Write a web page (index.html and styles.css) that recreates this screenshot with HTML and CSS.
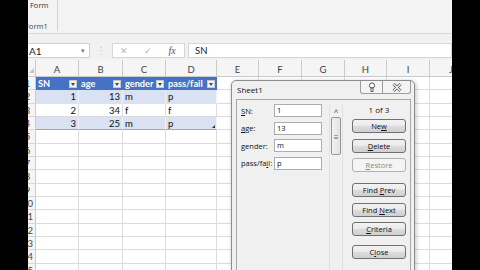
FILE: index.html
```html
<!DOCTYPE html>
<html lang="en">
<head>
  <meta charset="UTF-8" />
  <title>Sheet1 form</title>
  <link rel="stylesheet" href="styles.css">
</head>
<body>
  <div class="screen">
    <div class="ribbon">
      <div class="ribbon-group">
        <div class="ribbon-cmd">Form</div>
        <div class="ribbon-label">Form1</div>
      </div>
    </div>

    <div class="formula-bar">
      <div class="name-box"><span>A1</span><span class="caret">&#9662;</span></div>
      <div class="bar-grip">&#8942;</div>
      <div class="fx-box">
        <span class="fx-btn">&#10005;</span>
        <span class="fx-btn">&#10003;</span>
        <span class="fx-btn fx">fx</span>
      </div>
      <div class="formula">SN</div>
    </div>

    <div class="sheet">
      <div class="row cols">
        <div class="corner"></div><div>A</div><div>B</div><div>C</div><div>D</div><div>E</div><div>F</div><div>G</div><div>H</div><div>I</div><div>J</div>
      </div>
      <div class="row">
        <div class="rh"><span>1</span></div>
        <div class="th">SN<b class="flt"></b></div>
        <div class="th">age<b class="flt"></b></div>
        <div class="th">gender<b class="flt"></b></div>
        <div class="th">pass/fail<b class="flt"></b></div>
        <div></div><div></div><div></div><div></div><div></div><div></div>
      </div>
      <div class="row">
        <div class="rh"><span>2</span></div>
        <div class="band num">1</div><div class="band num">13</div><div class="band">m</div><div class="band">p</div>
        <div></div><div></div><div></div><div></div><div></div><div></div>
      </div>
      <div class="row">
        <div class="rh"><span>3</span></div>
        <div class="num">2</div><div class="num">34</div><div>f</div><div>f</div>
        <div></div><div></div><div></div><div></div><div></div><div></div>
      </div>
      <div class="row">
        <div class="rh"><span>4</span></div>
        <div class="band num tb-end">3</div><div class="band num tb-end">25</div><div class="band tb-end">m</div><div class="band tb-end handle">p</div>
        <div></div><div></div><div></div><div></div><div></div><div></div>
      </div>
      <div class="row"><div class="rh"><span>5</span></div><div></div><div></div><div></div><div></div><div></div><div></div><div></div><div></div><div></div><div></div></div>
      <div class="row"><div class="rh"><span>6</span></div><div></div><div></div><div></div><div></div><div></div><div></div><div></div><div></div><div></div><div></div></div>
      <div class="row"><div class="rh"><span>7</span></div><div></div><div></div><div></div><div></div><div></div><div></div><div></div><div></div><div></div><div></div></div>
      <div class="row"><div class="rh"><span>8</span></div><div></div><div></div><div></div><div></div><div></div><div></div><div></div><div></div><div></div><div></div></div>
      <div class="row"><div class="rh"><span>9</span></div><div></div><div></div><div></div><div></div><div></div><div></div><div></div><div></div><div></div><div></div></div>
      <div class="row"><div class="rh"><span>10</span></div><div></div><div></div><div></div><div></div><div></div><div></div><div></div><div></div><div></div><div></div></div>
      <div class="row"><div class="rh"><span>11</span></div><div></div><div></div><div></div><div></div><div></div><div></div><div></div><div></div><div></div><div></div></div>
      <div class="row"><div class="rh"><span>12</span></div><div></div><div></div><div></div><div></div><div></div><div></div><div></div><div></div><div></div><div></div></div>
      <div class="row"><div class="rh"><span>13</span></div><div></div><div></div><div></div><div></div><div></div><div></div><div></div><div></div><div></div><div></div></div>
      <div class="row"><div class="rh"><span>14</span></div><div></div><div></div><div></div><div></div><div></div><div></div><div></div><div></div><div></div><div></div></div>
      <div class="row"><div class="rh"><span>15</span></div><div></div><div></div><div></div><div></div><div></div><div></div><div></div><div></div><div></div><div></div></div>
    </div>

    <div class="dialog">
      <div class="dlg-title">
        <span>Sheet1</span>
        <div class="dlg-ctrls">
          <span class="ctl help">
            <svg width="8" height="10" viewBox="0 0 8 10">
              <circle cx="4" cy="3.5" r="2.6" fill="#fff" stroke="#555" stroke-width="1"/>
              <rect x="3" y="6" width="2" height="3.5" fill="#fff" stroke="#555" stroke-width="0.9"/>
            </svg>
          </span>
          <span class="ctl close">
            <svg width="10" height="9" viewBox="0 0 10 9">
              <path d="M1.5 1 L8.5 8 M8.5 1 L1.5 8" stroke="#555" stroke-width="2.8"/>
              <path d="M1.5 1 L8.5 8 M8.5 1 L1.5 8" stroke="#fff" stroke-width="1.1"/>
            </svg>
          </span>
        </div>
      </div>
      <div class="dlg-body">
        <div class="fields">
          <div class="field"><label><u>S</u>N:</label><div class="input">1</div></div>
          <div class="field"><label><u>a</u>ge:</label><div class="input">13</div></div>
          <div class="field"><label><u>g</u>ender:</label><div class="input">m</div></div>
          <div class="field"><label>pass/fa<u>i</u>l:</label><div class="input">p</div></div>
        </div>
        <div class="scroll">
          <div class="scroll-up">&#708;</div>
          <div class="thumb">&#8801;</div>
        </div>
        <div class="actions">
          <div class="count">1 of 3</div>
          <button>Ne<u>w</u></button>
          <button><u>D</u>elete</button>
          <button disabled><u>R</u>estore</button>
          <button class="group">Find <u>P</u>rev</button>
          <button>Find <u>N</u>ext</button>
          <button><u>C</u>riteria</button>
          <button class="last">C<u>l</u>ose</button>
        </div>
      </div>
    </div>
  </div>
</body>
</html>
```

FILE: styles.css
```css
body {
  margin: 0;
  background: #000;
  font-family: Lato, "Liberation Sans", sans-serif;
}
.screen {
  position: relative;
  width: 424px;
  height: 270px;
  margin-left: 28px;
  overflow: hidden;
  background: #fff;
}

/* ribbon + formula bar */
.ribbon {
  height: 33px;
  background: #f3f3f3;
  border-bottom: 1px solid #d8d8d8;
  display: flex;
}
.ribbon-group {
  width: 29px;
  height: 31px;
  border-right: 1px solid #d2d2d2;
  display: flex;
  flex-direction: column;
  justify-content: space-between;
  font-family: "Open Sans", sans-serif;
  font-size: 7.5px;
  line-height: 10px;
  color: #333;
}
.ribbon-cmd {
  padding: 0 0 0 2px;
}
.ribbon-label {
  margin-left: -3px;
  color: #444;
}
.formula-bar {
  height: 26px;
  box-sizing: border-box;
  padding-top: 9px;
  background: #f1f1f1;
  display: flex;
  align-items: flex-start;
}
.name-box {
  width: 65px;
  height: 15px;
  margin-left: -3px;
  padding: 0 4px 0 3px;
  box-sizing: border-box;
  background: #fff;
  border: 1px solid #cfcfcf;
  display: flex;
  justify-content: space-between;
  align-items: center;
  font-size: 10px;
  color: #222;
}
.caret {
  font-size: 7px;
  color: #777;
}
.bar-grip {
  width: 22px;
  text-align: center;
  font-size: 10px;
  line-height: 15px;
  color: #c2c2c2;
}
.fx-box {
  width: 73px;
  height: 15px;
  box-sizing: border-box;
  background: #fff;
  border: 1px solid #d6d6d6;
  display: flex;
  align-items: center;
  padding-left: 6px;
  gap: 14px;
}
.fx-btn {
  width: 10px;
  text-align: center;
  font-size: 9px;
  color: #b4b4b4;
}
.fx {
  font-family: "Liberation Serif", serif;
  font-style: italic;
  font-size: 10px;
  color: #555;
}
.formula {
  flex: 1;
  height: 15px;
  margin-left: 3px;
  padding-left: 6px;
  box-sizing: border-box;
  background: #fff;
  border: 1px solid #d6d6d6;
  font-size: 9.5px;
  line-height: 13px;
  color: #222;
}

/* sheet grid */
.row {
  display: grid;
  grid-template-columns: 8px 43px 44px 43px 51px 42px 43px 43px 42px 43px 43px;
  height: 13.333px;
}
.row > div {
  box-sizing: border-box;
  border-right: 1px solid #dcdcdc;
  border-bottom: 1px solid #dcdcdc;
  overflow: hidden;
  white-space: nowrap;
  font-size: 9.5px;
  line-height: 13px;
  padding: 0 2px;
  color: #111;
}
.row.cols {
  height: 17px;
}
.row.cols > div {
  background: #f5f5f5;
  border-color: #cacaca;
  text-align: center;
  color: #444;
  padding-top: 4px;
  line-height: 12px;
}
.row.cols > .corner {
  position: relative;
}
.corner::after {
  content: "";
  position: absolute;
  right: 1px;
  bottom: 3px;
  border-left: 5px solid transparent;
  border-bottom: 5px solid #c4c4c4;
}
.row > .rh {
  background: #f5f5f5;
  border-right-color: #cacaca;
  border-bottom-color: #d6d6d6;
  padding: 0;
  color: #444;
}
.rh span {
  display: block;
  width: 17px;
  margin-left: -9px;
  text-align: center;
}
.row > .th {
  background: #4472c4;
  border-color: #4472c4;
  color: #fff;
  font-weight: bold;
  font-size: 9.2px;
  display: flex;
  align-items: center;
  justify-content: space-between;
  padding: 1px 1px 0 2px;
}
.flt {
  position: relative;
  flex: none;
  width: 8px;
  height: 8px;
  box-sizing: border-box;
  background: #f3f3f3;
  border: 1px solid #c8c8c8;
}
.flt::after {
  content: "";
  position: absolute;
  left: 1px;
  top: 2px;
  border-left: 2.5px solid transparent;
  border-right: 2.5px solid transparent;
  border-top: 3px solid #444;
}
.row > .band {
  background: #d9e1f2;
  border-color: #d9e1f2;
  border-right-color: #eef2f9;
}
.row > .num {
  text-align: right;
}
.row > .tb-end {
  border-bottom-color: #8ea9db;
}
.row > .handle {
  position: relative;
}
.handle::after {
  content: "";
  position: absolute;
  right: 1px;
  bottom: 1px;
  border-left: 3px solid transparent;
  border-bottom: 3px solid #333;
}

/* data form dialog */
.dialog {
  position: absolute;
  left: 203px;
  top: 80px;
  width: 184px;
  height: 200px;
  box-sizing: border-box;
  background: #f0f0f0;
  border: 1px solid #8d8d8d;
  border-radius: 5px 5px 0 0;
  box-shadow: 1px 1px 4px rgba(0, 0, 0, 0.25);
  font-family: "Open Sans", sans-serif;
  font-size: 7.5px;
  color: #111;
  display: flex;
  flex-direction: column;
}
.dlg-title {
  height: 18px;
  display: flex;
  justify-content: space-between;
  align-items: flex-start;
  padding-left: 5px;
  line-height: 17px;
  font-size: 8px;
}
.dlg-ctrls {
  display: flex;
  margin-right: 3px;
  height: 12px;
  border: 1px solid #9c9c9c;
  border-top: none;
  border-radius: 0 0 3px 3px;
  background: #f4f4f4;
}
.ctl {
  display: flex;
  align-items: center;
  justify-content: center;
}
.help {
  width: 21px;
  border-right: 1px solid #9c9c9c;
}
.close {
  width: 27px;
}
.dlg-body {
  flex: 1;
  margin: 0 3px 0 4px;
  border: 1px solid #a8a8a8;
  padding: 4px 0 0 4px;
  display: flex;
  align-items: flex-start;
}
.fields {
  width: 81px;
  display: flex;
  flex-direction: column;
  gap: 4.5px;
}
.field {
  display: flex;
  align-items: center;
  height: 13px;
}
.field label {
  width: 33px;
  flex: none;
  white-space: nowrap;
}
.input {
  width: 48px;
  height: 13px;
  box-sizing: border-box;
  background: #fff;
  border: 1px solid #abadb3;
  padding-left: 2px;
  line-height: 11px;
}
.scroll {
  width: 14px;
  height: 170px;
  margin-left: 7px;
  box-sizing: border-box;
  border-left: 1px solid #e2e2e2;
  border-right: 1px solid #e2e2e2;
  display: flex;
  flex-direction: column;
  align-items: center;
}
.scroll-up {
  height: 13px;
  line-height: 14px;
  font-size: 8px;
  color: #555;
}
.thumb {
  width: 10px;
  height: 38px;
  box-sizing: border-box;
  border: 1px solid #979797;
  border-radius: 2px;
  background: linear-gradient(to right, #f2f2f2, #e2e2e2);
  display: flex;
  align-items: center;
  justify-content: center;
  font-size: 8px;
  color: #666;
}
.actions {
  width: 54px;
  margin-left: 9px;
  display: flex;
  flex-direction: column;
}
.count {
  height: 15px;
  line-height: 12px;
  text-align: center;
  font-size: 8px;
}
button {
  height: 14px;
  margin: 5.5px 0 0;
  padding: 0;
  border: 1px solid #707070;
  border-radius: 3px;
  background: linear-gradient(#f2f2f2, #ebebeb 45%, #dddddd 50%, #cfcfcf);
  font-family: "Open Sans", sans-serif;
  font-size: 7.5px;
  line-height: 12px;
  color: #111;
}
.count + button {
  margin-top: 0;
}
button:disabled {
  border-color: #adb2b5;
  background: #f4f4f4;
  color: #8a8a8a;
}
button.group {
  margin-top: 11px;
}
button.last {
  margin-top: 9px;
}
```
